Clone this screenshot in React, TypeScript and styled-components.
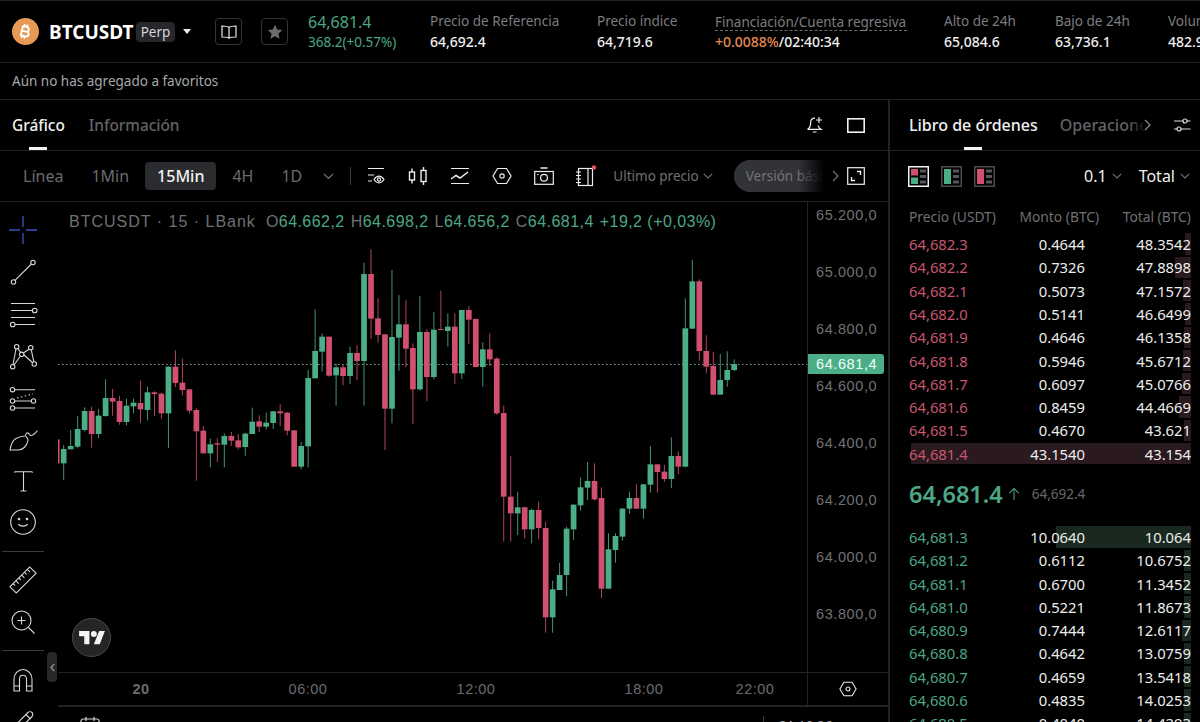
import React from 'react';
import styled, { createGlobalStyle } from 'styled-components';
import { FaBitcoinSign } from 'react-icons/fa6';

const GREEN = '#4ca784';
const RED = '#c9566f';
const CANDLE_UP = '#4cae87';
const CANDLE_DOWN = '#d2506f';
const LINE = '#222326';

// wick top, wick bottom, body top, body bottom, up (measured at 3x from y=240)
const candles: [number, number, number, number, number][] = [
  [598, 670, 598, 670, 0], [615, 720, 627, 670, 1], [570, 628, 618, 628, 1], [528, 625, 567, 620, 1],
  [502, 574, 513, 570, 1], [500, 623, 513, 582, 0], [507, 595, 527, 582, 1], [418, 530, 474, 528, 1],
  [447, 527, 474, 485, 0], [468, 554, 483, 546, 0], [476, 556, 497, 546, 1], [476, 520, 488, 499, 1],
  [422, 549, 489, 508, 0], [440, 541, 457, 510, 1], [454, 528, 457, 462, 0], [458, 536, 461, 520, 0],
  [380, 624, 380, 520, 1], [331, 441, 380, 429, 0], [356, 466, 428, 450, 0], [448, 521, 448, 512, 0],
  [505, 722, 510, 574, 0], [558, 640, 572, 640, 0], [596, 682, 613, 640, 1], [595, 666, 610, 614, 0],
  [580, 682, 588, 614, 1], [576, 618, 588, 602, 0], [582, 628, 601, 622, 0], [578, 647, 581, 621, 1],
  [503, 582, 545, 582, 1], [526, 576, 544, 560, 0], [518, 568, 548, 560, 1], [513, 567, 514, 549, 1],
  [493, 558, 514, 520, 0], [516, 586, 518, 572, 0], [570, 680, 571, 680, 0], [606, 688, 618, 680, 1],
  [390, 682, 414, 619, 1], [208, 415, 333, 415, 1], [280, 395, 290, 335, 1], [290, 410, 290, 407, 0],
  [370, 497, 382, 406, 1], [375, 436, 382, 408, 0], [320, 432, 339, 408, 1], [316, 420, 339, 363, 0],
  [68, 497, 102, 363, 1], [28, 297, 102, 236, 0], [175, 308, 235, 285, 0], [282, 630, 283, 506, 0],
  [90, 550, 291, 506, 1], [165, 392, 253, 293, 1], [181, 382, 253, 326, 0], [310, 552, 324, 448, 0],
  [168, 452, 276, 448, 1], [268, 484, 276, 411, 0], [216, 418, 269, 411, 1], [152, 270, 267, 270, 0],
  [220, 320, 260, 273, 1], [220, 432, 260, 400, 0], [210, 417, 210, 400, 1], [198, 312, 210, 239, 0],
  [235, 381, 237, 381, 0], [307, 440, 328, 381, 1], [280, 378, 328, 358, 0], [352, 524, 356, 520, 0],
  [497, 905, 519, 770, 0], [648, 905, 770, 820, 0], [755, 885, 802, 820, 1], [800, 895, 802, 868, 0],
  [806, 910, 810, 868, 1], [785, 898, 810, 864, 0], [845, 1178, 864, 1132, 0], [1022, 1178, 1048, 1132, 1],
  [968, 1050, 1005, 1050, 1], [860, 1068, 866, 1005, 1], [793, 900, 794, 868, 1], [712, 812, 742, 796, 1],
  [666, 780, 723, 743, 1], [670, 782, 723, 778, 0], [742, 1074, 774, 1046, 0], [880, 1046, 928, 1046, 1],
  [880, 968, 888, 930, 1], [804, 902, 806, 890, 1], [755, 822, 774, 806, 1], [733, 806, 774, 806, 0],
  [732, 836, 733, 806, 1], [618, 758, 673, 734, 1], [673, 758, 673, 696, 0], [675, 726, 695, 717, 0],
  [592, 744, 648, 717, 1], [634, 702, 648, 680, 0], [175, 682, 265, 680, 1], [60, 266, 124, 266, 1],
  [118, 362, 124, 333, 0], [286, 400, 333, 380, 0], [335, 464, 378, 464, 0], [342, 464, 420, 464, 1],
  [334, 440, 390, 420, 1], [358, 394, 372, 390, 1],
];

const asks = [
  ['64,682.3', '0.4644', '48.3542', 6], ['64,682.2', '0.7326', '47.8898', 16], ['64,682.1', '0.5073', '47.1572', 8],
  ['64,682.0', '0.5141', '46.6499', 6], ['64,681.9', '0.4646', '46.1358', 7], ['64,681.8', '0.5946', '45.6712', 8],
  ['64,681.7', '0.6097', '45.0766', 9], ['64,681.6', '0.8459', '44.4669', 12], ['64,681.5', '0.4670', '43.621', 7],
  ['64,681.4', '43.1540', '43.154', 280],
] as const;

const bids = [
  ['64,681.3', '10.0640', '10.064', 135], ['64,681.2', '0.6112', '10.6752', 7], ['64,681.1', '0.6700', '11.3452', 7],
  ['64,681.0', '0.5221', '11.8673', 7], ['64,680.9', '0.7444', '12.6117', 9], ['64,680.8', '0.4642', '13.0759', 7],
  ['64,680.7', '0.4659', '13.5418', 7], ['64,680.6', '0.4835', '14.0253', 7], ['64,680.5', '0.4040', '14.4293', 7],
] as const;

const prices = ['65.200,0', '65.000,0', '64.800,0', '64.600,0', '64.400,0', '64.200,0', '64.000,0', '63.800,0'];

const GlobalStyle = createGlobalStyle`
  html, body {
    margin: 0;
    background: #000;
    overflow: hidden;
  }
  * { box-sizing: border-box; }
`;

const Page = styled.div`
  width: 1200px;
  height: 722px;
  display: flex;
  flex-direction: column;
  overflow: hidden;
  background: #000;
  color: #fff;
  font-family: 'Noto Sans', 'Liberation Sans', sans-serif;
`;

const Header = styled.header`
  height: 63px;
  flex: none;
  display: flex;
  align-items: center;
  border-top: 1px solid ${LINE};
  border-bottom: 1px solid ${LINE};
  padding-left: 12px;
  overflow: hidden;
  white-space: nowrap;
`;
const Coin = styled.div`
  width: 27px;
  height: 27px;
  flex: none;
  border-radius: 50%;
  background: #e89a55;
  display: flex;
  align-items: center;
  justify-content: center;
  margin-right: 10px;
  svg { transform: rotate(14deg); }
`;
const Symbol = styled.div`
  font-size: 19px;
  font-weight: 700;
  width: 87px;
  flex: none;
`;
const PerpChip = styled.div`
  width: 39px;
  height: 20px;
  flex: none;
  border-radius: 4px;
  background: #26272a;
  color: #d5d5d5;
  font-size: 13.5px;
  line-height: 20px;
  text-align: center;
`;
const Caret = styled.div`
  width: 0;
  height: 0;
  flex: none;
  margin: 0 24px 0 8px;
  border-left: 4px solid transparent;
  border-right: 4px solid transparent;
  border-top: 5px solid #eee;
`;
const SquareButton = styled.div`
  width: 27px;
  height: 27px;
  flex: none;
  border: 1px solid #333438;
  border-radius: 4px;
  display: flex;
  align-items: center;
  justify-content: center;
  margin-right: 19px;
`;
const LastPrice = styled.div`
  width: 122px;
  flex: none;
  margin-left: 1px;
  color: ${GREEN};
  display: flex;
  flex-direction: column;
`;
const LastBig = styled.span`
  font-size: 16px;
  line-height: 21px;
`;
const LastSmall = styled.span`
  font-size: 13.5px;
  line-height: 19px;
`;
const Stat = styled.div<{ $w: number }>`
  width: ${(p) => p.$w}px;
  flex: none;
  display: flex;
  flex-direction: column;
`;
const StatLabel = styled.span<{ $dashed?: boolean }>`
  color: #7c7d80;
  font-size: 13.5px;
  line-height: 20px;
  ${(p) => p.$dashed && 'border-bottom: 1px dashed #6a6b6e; height: 19px; width: 192px;'}
`;
const StatValue = styled.span`
  color: #f0f0f0;
  font-size: 14px;
  font-weight: 500;
  line-height: 21px;
`;
const Funding = styled.span`
  color: #e58a50;
`;

const FavRow = styled.div`
  height: 37px;
  flex: none;
  display: flex;
  align-items: center;
  padding-left: 12px;
  border-bottom: 1px solid ${LINE};
  color: #a6a7aa;
  font-size: 13.5px;
`;

const Main = styled.div`
  flex: 1;
  min-height: 0;
  display: flex;
`;
const ChartPanel = styled.section`
  width: 890px;
  flex: none;
  display: flex;
  flex-direction: column;
  border-right: 2px solid ${LINE};
`;
const TabsRow = styled.div`
  height: 51px;
  flex: none;
  display: flex;
  align-items: center;
  border-bottom: 1px solid ${LINE};
  position: relative;
`;
const ChartTabs = styled.div`
  display: flex;
  gap: 24px;
  padding-left: 12px;
  flex: 1;
`;
const Tab = styled.div<{ $active?: boolean; $size?: number }>`
  position: relative;
  height: 50px;
  font-size: ${(p) => p.$size ?? 16}px;
  font-weight: 500;
  line-height: ${(p) => (p.$size ? 52 : 50)}px;
  white-space: nowrap;
  color: ${(p) => (p.$active ? '#f2f2f2' : '#626366')};
  ${(p) =>
    p.$active &&
    `&::after {
      content: '';
      position: absolute;
      left: 50%;
      bottom: 0;
      width: 18px;
      height: 3px;
      margin-left: -9px;
      background: #f2f2f2;
    }`}
`;
const PanelActions = styled.div`
  display: flex;
  align-items: center;
  gap: 23px;
  padding-right: 23px;
`;

const Toolbar = styled.div`
  height: 51px;
  flex: none;
  display: flex;
  align-items: center;
  padding-left: 11px;
  border-bottom: 1px solid ${LINE};
`;
const Interval = styled.div<{ $active?: boolean }>`
  height: 28px;
  padding: 0 12px;
  margin-right: 4px;
  border-radius: 4px;
  font-size: 16px;
  line-height: 28px;
  white-space: nowrap;
  background: ${(p) => (p.$active ? '#2b2c2f' : 'transparent')};
  color: ${(p) => (p.$active ? '#f2f2f2' : '#6a6b6e')};
  font-weight: ${(p) => (p.$active ? 500 : 400)};
`;
const IntervalMore = styled.div`
  margin-left: 5px;
  display: flex;
`;
const ToolDivider = styled.div`
  width: 1px;
  height: 18px;
  background: #3a3b3e;
  margin: 0 4px 0 16px;
`;
const ToolIcon = styled.div`
  width: 42px;
  height: 42px;
  flex: none;
  display: flex;
  align-items: center;
  justify-content: center;
`;
const LastPriceSelect = styled.div`
  display: flex;
  align-items: center;
  gap: 4px;
  margin: 0 21px 0 6px;
  color: #6f7073;
  font-size: 13.5px;
  white-space: nowrap;
`;
const VersionPill = styled.div`
  position: relative;
  width: 90px;
  height: 32px;
  flex: none;
  border-radius: 16px 0 0 16px;
  background: #323337;
  color: #727377;
  font-size: 13.5px;
  line-height: 32px;
  padding-left: 12px;
  white-space: nowrap;
  overflow: hidden;
  &::after {
    content: '';
    position: absolute;
    top: 0;
    right: 0;
    bottom: 0;
    width: 26px;
    background: linear-gradient(90deg, transparent, #000);
  }
`;
const PillArrow = styled.div`
  width: 23px;
  display: flex;
  justify-content: center;
`;

const ChartBody = styled.div`
  flex: 1;
  min-height: 0;
  display: flex;
`;
const ToolRail = styled.aside`
  position: relative;
  width: 58px;
  flex: none;
  display: flex;
  flex-direction: column;
  padding-top: 7px;
`;
const RailItem = styled.div`
  width: 46px;
  height: 41.8px;
  flex: none;
  display: flex;
  align-items: center;
  justify-content: center;
`;
const RailDivider = styled.div`
  width: 42px;
  height: 1px;
  flex: none;
  margin: 7.5px 0 7.5px 2px;
  background: #3a3b3e;
`;
const CollapseTab = styled.div`
  position: absolute;
  left: 47px;
  top: 450px;
  width: 10px;
  height: 30px;
  border-radius: 4px;
  background: #27282a;
  display: flex;
  align-items: center;
  justify-content: center;
`;
const ChartColumn = styled.div`
  flex: 1;
  min-width: 0;
  display: flex;
  flex-direction: column;
`;
const PlotRow = styled.div`
  height: 471px;
  flex: none;
  display: flex;
  border-bottom: 1px solid ${LINE};
`;
const Plot = styled.div`
  position: relative;
  width: 749px;
  flex: none;
  overflow: hidden;
`;
const PlotSvg = styled.svg`
  display: block;
`;
const Legend = styled.div`
  position: absolute;
  left: 11px;
  top: 9px;
  display: flex;
  font-family: 'Liberation Sans', Arial, sans-serif;
  font-size: 16px;
  line-height: 22px;
  letter-spacing: 0.45px;
  white-space: nowrap;
  color: #6f7073;
`;
const LegendName = styled.span`
  margin-right: 10px;
  letter-spacing: 1px;
`;
const LegendValue = styled.span`
  color: ${GREEN};
  margin-right: 6px;
`;
const TvBadge = styled.div`
  position: absolute;
  left: 14px;
  top: 416px;
  width: 39px;
  height: 39px;
  border-radius: 50%;
  border: 1px solid #4a4b4e;
  background: #242527;
  display: flex;
  align-items: center;
  justify-content: center;
`;
const PriceAxis = styled.div`
  position: relative;
  flex: 1;
  border-left: 1px solid ${LINE};
  padding: 0 0 0 8px;
  display: flex;
  flex-direction: column;
  font-family: 'Liberation Sans', Arial, sans-serif;
  font-size: 14.5px;
  letter-spacing: 0.6px;
  color: #707174;
`;
const PriceTick = styled.div`
  height: 57px;
  flex: none;
  line-height: 26px;
`;
const PriceBadge = styled.div`
  position: absolute;
  left: 0;
  top: 152px;
  width: 76px;
  height: 20px;
  padding-left: 8px;
  border-radius: 0 3px 3px 0;
  background: ${CANDLE_UP};
  color: #f2fff9;
  line-height: 20px;
`;
const TimeRow = styled.div`
  height: 34px;
  flex: none;
  display: flex;
  align-items: center;
  border-bottom: 2px solid ${LINE};
  font-family: 'Liberation Sans', Arial, sans-serif;
  font-size: 14.5px;
  letter-spacing: 0.5px;
  color: #6a6b6e;
`;
const TimeLabel = styled.div<{ $w: number; $bold?: boolean }>`
  width: ${(p) => p.$w}px;
  flex: none;
  text-align: center;
  font-weight: ${(p) => (p.$bold ? 700 : 400)};
`;
const AxisCorner = styled.div`
  margin-left: 25px;
  flex: 1;
  height: 100%;
  border-left: 1px solid ${LINE};
  display: flex;
  align-items: center;
  justify-content: center;
`;
const ChartFooter = styled.div`
  flex: 1;
  display: flex;
  align-items: flex-start;
  padding: 9px 0 0 22px;
  color: #a0a1a4;
  font-size: 13.5px;
`;
const FooterTime = styled.div`
  margin-left: 663px;
  padding-left: 15px;
  border-left: 1px solid #3a3b3e;
  line-height: 20px;
  white-space: nowrap;
`;

const BookPanel = styled.section`
  flex: 1;
  min-width: 0;
  display: flex;
  flex-direction: column;
  overflow: hidden;
`;
const BookTabs = styled.div`
  display: flex;
  padding-left: 19px;
  gap: 22px;
  flex: 1;
  overflow: hidden;
`;
const FadedTab = styled.div`
  position: relative;
  width: 86px;
  flex: none;
  overflow: hidden;
  &::after {
    content: '';
    position: absolute;
    top: 0;
    right: 0;
    bottom: 0;
    width: 18px;
    background: linear-gradient(90deg, transparent, #000);
  }
`;
const BookTabEnd = styled.div`
  display: flex;
  align-items: center;
  gap: 22px;
  padding-right: 9px;
`;
const BookControls = styled.div`
  height: 50px;
  flex: none;
  display: flex;
  align-items: center;
  padding: 0 10px 0 18px;
`;
const LayoutIcons = styled.div`
  display: flex;
  gap: 12px;
  flex: 1;
`;
const Select = styled.div`
  display: flex;
  align-items: center;
  gap: 5px;
  margin-left: 17px;
  font-size: 16px;
  color: #f0f0f0;
`;
const BookHeader = styled.div`
  height: 31.4px;
  flex: none;
  display: flex;
  align-items: center;
  justify-content: space-between;
  padding: 0 9px 0 19px;
  color: #6f7073;
  font-size: 13.8px;
`;
const BookRow = styled.div`
  position: relative;
  height: 23.3px;
  flex: none;
  display: grid;
  grid-template-columns: 1fr 90px 106px;
  align-items: center;
  padding: 0 9px 0 19px;
  font-size: 14.8px;
  color: #ededed;
  white-space: nowrap;
`;
const DepthBar = styled.div<{ $side: 'ask' | 'bid' }>`
  position: absolute;
  right: 9px;
  top: 1px;
  bottom: 1px;
  background: ${(p) => (p.$side === 'ask' ? '#2a191f' : '#19291f')};
`;
const RowPrice = styled.span<{ $side: 'ask' | 'bid' }>`
  position: relative;
  color: ${(p) => (p.$side === 'ask' ? RED : GREEN)};
`;
const RowNum = styled.span`
  position: relative;
  text-align: right;
`;
const MidPrice = styled.div`
  height: 60px;
  flex: none;
  display: flex;
  align-items: center;
  padding: 0 0 2px 19px;
`;
const MidValue = styled.span`
  color: ${GREEN};
  font-size: 23.5px;
  font-weight: 600;
`;
const MidRef = styled.span`
  margin-left: 12px;
  color: #67686b;
  font-size: 13.5px;
`;

const Ico = styled.svg`
  display: block;
  fill: none;
  stroke: currentColor;
  stroke-width: 1.2;
`;

function BookOpenIcon() {
  return (
    <Ico width="16" height="14" viewBox="0 0 16 14" style={{ color: '#e8e8e8' }}>
      <path d="M8 2.5C7 1.4 5.5 1 1 1v11c4.5 0 6 .4 7 1.2 1-.8 2.5-1.2 7-1.2V1c-4.5 0-6 .4-7 1.5zM8 2.5v10.7" />
    </Ico>
  );
}
function StarIcon() {
  return (
    <svg width="16" height="16" viewBox="0 0 16 16" fill="#6a6b6e">
      <path d="M8 .8l2.2 4.7 5.1.6-3.8 3.5 1 5.1L8 12.2 3.5 14.7l1-5.1L.7 6.1l5.1-.6z" />
    </svg>
  );
}
function Chevron({ color = '#6f7073', size = 10 }: { color?: string; size?: number }) {
  return (
    <Ico width={size} height={size * 0.6} viewBox="0 0 10 6" style={{ color }}>
      <path d="M.8.8L5 5l4.2-4.2" />
    </Ico>
  );
}
function ChevronRight({ color = '#8a8b8e' }: { color?: string }) {
  return (
    <Ico width="7" height="12" viewBox="0 0 7 12" style={{ color }}>
      <path d="M1 1l5 5-5 5" />
    </Ico>
  );
}
function ChevronLeft() {
  return (
    <Ico width="5" height="9" viewBox="0 0 5 9" style={{ color: '#9a9b9e' }}>
      <path d="M4.300.8L1 4.500l3.300 3.700" />
    </Ico>
  );
}
function BellPlus() {
  return (
    <Ico width="18" height="18" viewBox="0 0 18 18" style={{ color: '#f0f0f0' }}>
      <path d="M9 2.2C5.8 2.2 4.6 4.6 4.6 7c0 3-1 5.2-3 6.3h13.2c-1.4-.8-2.2-2-2.6-3.6M6.8 16h3.8M13 1v6M10 4h6" />
    </Ico>
  );
}
function SquareIcon() {
  return <Ico width="18" height="15" viewBox="0 0 18 15" style={{ color: '#f0f0f0', strokeWidth: 1.6 }}><rect x=".8" y=".8" width="16.4" height="13.4" /></Ico>;
}
function ExpandIcon() {
  return (
    <Ico width="18" height="18" viewBox="0 0 18 18" style={{ color: '#f0f0f0' }}>
      <rect x=".7" y=".7" width="16.6" height="16.6" />
      <path d="M10 4.5h3.5V8M8 13.5H4.5V10" strokeWidth="1.4" />
    </Ico>
  );
}
function WatchIcon() {
  return (
    <Ico width="20" height="18" viewBox="0 0 20 18" style={{ color: '#ededed' }}>
      <path d="M2 1.500h16M2 8h6M2 14h4" />
      <path d="M8 12.500c1.500-2.300 3.200-3.300 5-3.300s3.500 1 5 3.300c-1.500 2.300-3.200 3.300-5 3.300s-3.500-1-5-3.300z" />
      <circle cx="13" cy="12.500" r="1.600" />
    </Ico>
  );
}
function CandlesIcon() {
  return (
    <Ico width="20" height="20" viewBox="0 0 20 20" style={{ color: '#ededed', strokeWidth: 1.4 }}>
      <rect x="1.500" y="6" width="5" height="8" />
      <rect x="13" y="4.500" width="5" height="11" />
      <path d="M4 2.500V6M4 14v3.500M15.500 1v3.500M15.500 15.500V19" />
    </Ico>
  );
}
function TrendIcon() {
  return (
    <Ico width="20" height="18" viewBox="0 0 20 18" style={{ color: '#ededed' }}>
      <path d="M1 1.500h18M1 16.500h18" />
      <path d="M1 12l5-3.500 4 2.500 8-6" strokeWidth="1.500" />
    </Ico>
  );
}
function HexIcon({ size = 20 }: { size?: number }) {
  return (
    <Ico width={size} height={size} viewBox="0 0 20 20" style={{ color: '#ededed' }}>
      <path d="M5.500 2.500h9L19 10l-4.500 7.500h-9L1 10z" />
      <circle cx="10" cy="10" r="2.200" />
    </Ico>
  );
}
function CameraIcon() {
  return (
    <Ico width="20" height="18" viewBox="0 0 20 18" style={{ color: '#ededed' }}>
      <rect x=".7" y="4.500" width="18.600" height="12.800" />
      <path d="M6.500 1h7" strokeWidth="1.500" />
      <circle cx="10" cy="10.800" r="3.400" />
      <path d="M3 7.500h1.500" />
    </Ico>
  );
}
function NotesIcon() {
  return (
    <Ico width="22" height="22" viewBox="0 0 22 22" style={{ color: '#ededed' }}>
      <rect x="3.500" y="3.500" width="14" height="17" />
      <path d="M13 3.500v17M1 7h5M1 10.500h5M1 14h5M1 17.500h5" />
      <circle cx="19" cy="2.500" r="2.200" fill="#e2545f" stroke="none" />
    </Ico>
  );
}
function SlidersIcon() {
  return (
    <Ico width="18" height="16" viewBox="0 0 18 16" style={{ color: '#e0e0e0' }}>
      <path d="M1 4h9M14 4h3.500M1 12h3M8 12h9.500" />
      <circle cx="12" cy="4" r="2" />
      <circle cx="6" cy="12" r="2" />
    </Ico>
  );
}
function LayoutIcon({ mode, active }: { mode: 'both' | 'bid' | 'ask'; active?: boolean }) {
  const edge = active ? '#f2f2f2' : '#4a4b4e';
  return (
    <svg width="21" height="21" viewBox="0 0 21 21">
      <rect x=".75" y=".75" width="19.500" height="19.500" fill="none" stroke={edge} strokeWidth="1.500" />
      {mode === 'both' && <rect x="3" y="3" width="7" height="6.500" fill={CANDLE_DOWN} />}
      {mode === 'both' && <rect x="3" y="11.500" width="7" height="6.500" fill={CANDLE_UP} />}
      {mode !== 'both' && <rect x="3" y="3" width="7" height="15" fill={mode === 'bid' ? CANDLE_UP : CANDLE_DOWN} />}
      <path d="M12 5h6M12 10.500h6M12 16h6" stroke="#55565a" strokeWidth="3" />
    </svg>
  );
}

const railStroke = { color: '#d8d8d8', strokeWidth: 1.1 };

function railIcon(body: React.ReactNode) {
  return (
    <Ico width="30" height="30" viewBox="0 0 30 30" style={railStroke}>
      {body}
    </Ico>
  );
}

const railTop: React.ReactNode[] = [
  <Ico width="30" height="30" viewBox="0 0 30 30" style={{ color: '#3f50c8', strokeWidth: 1.3 }}>
    <path d="M15 1v11M15 18v11M1 15h11M18 15h11" />
  </Ico>,
  railIcon(<><circle cx="5.500" cy="25" r="2.200" /><circle cx="25" cy="5.500" r="2.200" /><path d="M7 23.400L23.400 7" /></>),
  railIcon(<><path d="M3 5.500h24M3 12.500h21.500M3 19.500h24M7 26.500h20" /><circle cx="26.700" cy="12.500" r="2.300" /><circle cx="4.700" cy="26.500" r="2.300" /></>),
  railIcon(<><circle cx="8.700" cy="6.700" r="2.200" /><circle cx="22.700" cy="7.700" r="2.200" /><circle cx="13.700" cy="14.300" r="2.200" /><circle cx="4.700" cy="26.700" r="2.200" /><circle cx="26.300" cy="24" r="2.200" /><path d="M8 9L5 24.500M10 8.500l2.500 4M21 9.200l-5.700 3.800M23.300 10l2.500 11.700M12.500 16L6 25M16 15l8.500 7.500" /></>),
  railIcon(<><circle cx="4.500" cy="7.700" r="2.200" /><circle cx="4.500" cy="19" r="2.200" /><circle cx="25.500" cy="19" r="2.200" /><circle cx="4.500" cy="26" r="2.200" /><path d="M6.700 7.700H27M6.700 19h16.600M6.700 26H27" /><path d="M9 16l16-4" strokeDasharray="1.500 2.500" /></>),
  railIcon(<><path d="M2 26c.8-5 2.800-9.800 6-11.500 3-1.500 7-2.500 9-2.500 1.500 0 3 3 3 4.500-1.200 6-5.500 9.500-10 9.500z" /><path d="M17.500 11.500c.3-2 1.500-3 2.500-2.500 1 .5 1.500 2.500 2.500 2.500 2.500 0 5.500-3 7-5" /></>),
  railIcon(<path d="M6.700 5.700h17.600M15.500 5.700V25M12.500 25h6M6.700 5.700v1M24.300 5.700v1" />),
  railIcon(<><circle cx="15" cy="15" r="12.300" /><circle cx="11" cy="12" r=".8" fill="#d8d8d8" /><circle cx="19" cy="12" r=".8" fill="#d8d8d8" /><path d="M10.500 17c1 2.800 8 2.800 9 0" /></>),
];

const railMid: React.ReactNode[] = [
  railIcon(<g transform="rotate(-45 15 15)"><rect x="1" y="10.500" width="28" height="9" /><path d="M5.500 10.500v3M9.500 10.500v4M13.500 10.500v3M17.500 10.500v4M21.500 10.500v3M25.500 10.500v4" /></g>),
  railIcon(<><circle cx="13.500" cy="13.500" r="9.500" /><path d="M13.500 9.500v8M9.500 13.500h8M20.500 20.500l6 6" /></>),
];

const railBottom: React.ReactNode[] = [
  railIcon(<path d="M6 26V14C6 9 10 4.500 15 4.500S24 9 24 14v12h-5.500V14c-.3-5-7-5-7 0v12zM6 21h5.500M18.500 21H24" />),
  railIcon(<><path d="M5 25l1.500-6L20 5.500c1-1 3-1 4 0s1 3 0 4L10.500 23z" /><path d="M18 7.500l4.500 4.500" /></>),
];

function CandleChart() {
  return (
    <PlotSvg width="749" height="470" viewBox="0 0 749 470">
      <line x1="0" x2="749" y1="162.500" y2="162.500" stroke="#7aa593" strokeWidth="1" strokeDasharray="1.500 2.500" />
      {candles.map(([wt, wb, bt, bb, up], i) => {
        const x = 5.67 + 6.985 * (i - 1);
        const color = up ? CANDLE_UP : CANDLE_DOWN;
        const y = (z: number) => 38 + z / 3;
        return (
          <g key={i}>
            <rect x={x - 0.5} y={y(wt)} width="1" height={(wb - wt) / 3} fill={color} opacity="0.85" />
            <rect x={x - 2.85} y={y(bt)} width="5.700" height={Math.max((bb - bt) / 3, 1)} fill={color} />
          </g>
        );
      })}
    </PlotSvg>
  );
}

function TvLogo() {
  return (
    <svg width="26" height="14" viewBox="0 0 35 19" fill="#f4f4f4">
      <path d="M14 18H7V7H0V0h14v18zM28 18h-8L27.200 0H35l-7 18z" />
      <circle cx="20" cy="4" r="4" />
    </svg>
  );
}

export default function App() {
  return (
    <Page>
      <GlobalStyle />
      <Header>
        <Coin>
          <FaBitcoinSign size={15} color="#fff" />
        </Coin>
        <Symbol>BTCUSDT</Symbol>
        <PerpChip>Perp</PerpChip>
        <Caret />
        <SquareButton>
          <BookOpenIcon />
        </SquareButton>
        <SquareButton>
          <StarIcon />
        </SquareButton>
        <LastPrice>
          <LastBig>64,681.4</LastBig>
          <LastSmall>368.2(+0.57%)</LastSmall>
        </LastPrice>
        <Stat $w={167}>
          <StatLabel>Precio de Referencia</StatLabel>
          <StatValue>64,692.4</StatValue>
        </Stat>
        <Stat $w={118}>
          <StatLabel>Precio índice</StatLabel>
          <StatValue>64,719.6</StatValue>
        </Stat>
        <Stat $w={229}>
          <StatLabel $dashed>Financiación/Cuenta regresiva</StatLabel>
          <StatValue>
            <Funding>+0.0088%</Funding>/02:40:34
          </StatValue>
        </Stat>
        <Stat $w={111}>
          <StatLabel>Alto de 24h</StatLabel>
          <StatValue>65,084.6</StatValue>
        </Stat>
        <Stat $w={113}>
          <StatLabel>Bajo de 24h</StatLabel>
          <StatValue>63,736.1</StatValue>
        </Stat>
        <Stat $w={90}>
          <StatLabel>Volumen</StatLabel>
          <StatValue>482.95</StatValue>
        </Stat>
      </Header>
      <FavRow>Aún no has agregado a favoritos</FavRow>
      <Main>
        <ChartPanel>
          <TabsRow>
            <ChartTabs>
              <Tab $active $size={15.4}>Gráfico</Tab>
              <Tab $size={15.4}>Información</Tab>
            </ChartTabs>
            <PanelActions>
              <BellPlus />
              <SquareIcon />
            </PanelActions>
          </TabsRow>
          <Toolbar>
            <Interval>Línea</Interval>
            <Interval>1Min</Interval>
            <Interval $active>15Min</Interval>
            <Interval>4H</Interval>
            <Interval>1D</Interval>
            <IntervalMore>
              <Chevron size={11} />
            </IntervalMore>
            <ToolDivider />
            <ToolIcon><WatchIcon /></ToolIcon>
            <ToolIcon><CandlesIcon /></ToolIcon>
            <ToolIcon><TrendIcon /></ToolIcon>
            <ToolIcon><HexIcon /></ToolIcon>
            <ToolIcon><CameraIcon /></ToolIcon>
            <ToolIcon><NotesIcon /></ToolIcon>
            <LastPriceSelect>
              Ultimo precio
              <Chevron />
            </LastPriceSelect>
            <VersionPill>Versión básica</VersionPill>
            <PillArrow><ChevronRight color="#6f7073" /></PillArrow>
            <ExpandIcon />
          </Toolbar>
          <ChartBody>
            <ToolRail>
              {railTop.map((icon, i) => (
                <RailItem key={i}>{icon}</RailItem>
              ))}
              <RailDivider />
              {railMid.map((icon, i) => (
                <RailItem key={i}>{icon}</RailItem>
              ))}
              <RailDivider />
              {railBottom.map((icon, i) => (
                <RailItem key={i}>{icon}</RailItem>
              ))}
              <CollapseTab>
                <ChevronLeft />
              </CollapseTab>
            </ToolRail>
            <ChartColumn>
              <PlotRow>
                <Plot>
                  <CandleChart />
                  <Legend>
                    <LegendName>BTCUSDT · 15 · LBank</LegendName>
                    O<LegendValue>64.662,2</LegendValue>
                    H<LegendValue>64.698,2</LegendValue>
                    L<LegendValue>64.656,2</LegendValue>
                    C<LegendValue>64.681,4</LegendValue>
                    <LegendValue>+19,2 (+0,03%)</LegendValue>
                  </Legend>
                  <TvBadge>
                    <TvLogo />
                  </TvBadge>
                </Plot>
                <PriceAxis>
                  {prices.map((p) => (
                    <PriceTick key={p}>{p}</PriceTick>
                  ))}
                  <PriceBadge>64.681,4</PriceBadge>
                </PriceAxis>
              </PlotRow>
              <TimeRow>
                <TimeLabel $w={166} $bold>20</TimeLabel>
                <TimeLabel $w={168}>06:00</TimeLabel>
                <TimeLabel $w={168}>12:00</TimeLabel>
                <TimeLabel $w={168}>18:00</TimeLabel>
                <TimeLabel $w={54}>22:00</TimeLabel>
                <AxisCorner>
                  <HexIcon size={18} />
                </AxisCorner>
              </TimeRow>
              <ChartFooter>
                <Ico width="20" height="20" viewBox="0 0 20 20" style={{ color: '#d8d8d8' }}>
                  <rect x="1" y="3" width="18" height="16" rx="2" />
                  <path d="M6 1v4M14 1v4M1 8h18" />
                </Ico>
                <FooterTime>21:19:26</FooterTime>
              </ChartFooter>
            </ChartColumn>
          </ChartBody>
        </ChartPanel>
        <BookPanel>
          <TabsRow>
            <BookTabs>
              <Tab $active>Libro de órdenes</Tab>
              <FadedTab>
                <Tab>Operaciones</Tab>
              </FadedTab>
            </BookTabs>
            <BookTabEnd>
              <ChevronRight />
              <SlidersIcon />
            </BookTabEnd>
          </TabsRow>
          <BookControls>
            <LayoutIcons>
              <LayoutIcon mode="both" active />
              <LayoutIcon mode="bid" />
              <LayoutIcon mode="ask" />
            </LayoutIcons>
            <Select>
              0.1
              <Chevron />
            </Select>
            <Select>
              Total
              <Chevron />
            </Select>
          </BookControls>
          <BookHeader>
            <span>Precio (USDT)</span>
            <span>Monto (BTC)</span>
            <span>Total (BTC)</span>
          </BookHeader>
          {asks.map(([price, amount, total, depth]) => (
            <BookRow key={price}>
              <DepthBar $side="ask" style={{ width: depth }} />
              <RowPrice $side="ask">{price}</RowPrice>
              <RowNum>{amount}</RowNum>
              <RowNum>{total}</RowNum>
            </BookRow>
          ))}
          <MidPrice>
            <MidValue>64,681.4</MidValue>
            <Ico width="12" height="16" viewBox="0 0 14 16" style={{ color: GREEN, marginLeft: 5 }}>
              <path d="M7 15V1.500M1.500 7L7 1.500 12.500 7" />
            </Ico>
            <MidRef>64,692.4</MidRef>
          </MidPrice>
          {bids.map(([price, amount, total, depth]) => (
            <BookRow key={price}>
              <DepthBar $side="bid" style={{ width: depth }} />
              <RowPrice $side="bid">{price}</RowPrice>
              <RowNum>{amount}</RowNum>
              <RowNum>{total}</RowNum>
            </BookRow>
          ))}
        </BookPanel>
      </Main>
    </Page>
  );
}
